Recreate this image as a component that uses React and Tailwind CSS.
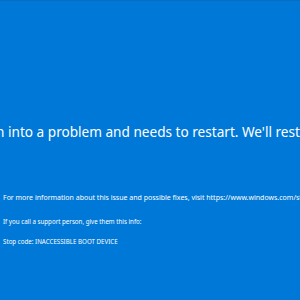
export default function App() {
  return (
    <div
      className="w-[300px] h-[300px] bg-[#0078d7] overflow-hidden border-t border-[#0a6cbf] text-white"
      style={{ fontFamily: '"Noto Sans", "Open Sans", sans-serif' }}
    >
      <div className="pt-[123px] pl-[3px] flex flex-col whitespace-nowrap">
        <p className="text-[13.6px] leading-[16px] -ml-[73px]">
          Your PC ran into a problem and needs to restart. We'll restart for you.
        </p>
        <p className="text-[7px] leading-[10px] mt-[53px]">
          For more information about this issue and possible fixes, visit https://www.windows.com/stopcode
        </p>
        <p className="text-[6.2px] leading-[8px] mt-[15px]">
          If you call a support person, give them this info:
        </p>
        <p className="text-[6.2px] leading-[8px] mt-[12px]">
          Stop code: INACCESSIBLE BOOT DEVICE
        </p>
      </div>
    </div>
  );
}
